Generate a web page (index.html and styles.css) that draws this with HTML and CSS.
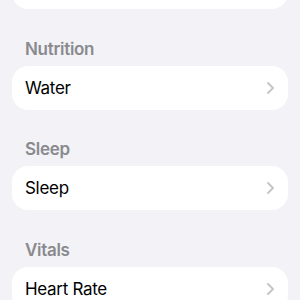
FILE: index.html
```html
<!DOCTYPE html>
<html>
<head>
<meta charset="utf-8">
<link rel="stylesheet" href="styles.css">
</head>
<body>
<div class="list">
  <div class="card"></div>

  <div class="header">Nutrition</div>
  <div class="card"><span class="label">Water</span><svg class="chev" viewBox="0 0 7 12"><path d="M1 1l5 5-5 5"/></svg></div>

  <div class="header">Sleep</div>
  <div class="card"><span class="label">Sleep</span><svg class="chev" viewBox="0 0 7 12"><path d="M1 1l5 5-5 5"/></svg></div>

  <div class="header">Vitals</div>
  <div class="card"><span class="label">Heart Rate</span><svg class="chev" viewBox="0 0 7 12"><path d="M1 1l5 5-5 5"/></svg></div>
</div>
</body>
</html>
```
FILE: styles.css
```css
html, body {
  margin: 0;
  padding: 0;
  background: #f2f2f7;
  font-family: Inter, "Noto Sans", sans-serif;
  overflow: hidden;
}
.list {
  display: flex;
  flex-direction: column;
  padding: 0 12px;
  margin-top: -35px;
}
.card {
  height: 44px;
  background: #fff;
  border-radius: 16px;
  display: flex;
  align-items: center;
  justify-content: space-between;
  padding: 0 14px 0 13px;
  box-sizing: border-box;
}
.label {
  font-size: 17px;
  color: #000;
  letter-spacing: -0.3px;
}
.chev {
  width: 7px;
  height: 12px;
  fill: none;
  stroke: #c4c4c7;
  stroke-width: 1.8;
  stroke-linecap: round;
  stroke-linejoin: round;
}
.header {
  font-size: 17px;
  font-weight: 600;
  line-height: 22px;
  color: #8a8a8e;
  padding: 28.5px 13px 6px;
  letter-spacing: -0.3px;
}
```
